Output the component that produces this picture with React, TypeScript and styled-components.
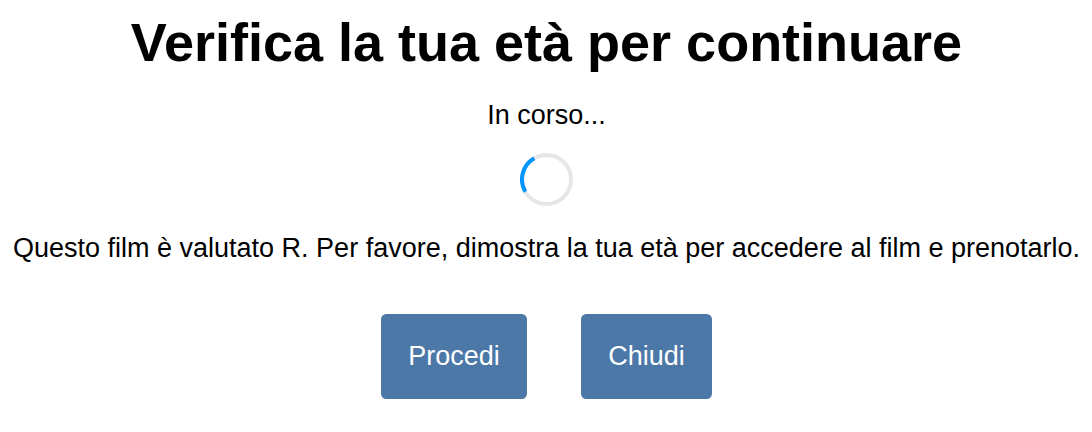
import React from "react";
import styled, { createGlobalStyle } from "styled-components";

const GlobalStyle = createGlobalStyle`
  body { margin: 0; background: #fff; }
`;

const Page = styled.main`
  box-sizing: border-box;
  height: 432px;
  overflow: hidden;
  display: flex;
  flex-direction: column;
  align-items: center;
  padding: 12px 0 0 1px;
  color: #000;
  font-family: "Liberation Sans", Arial, sans-serif;
  font-size: 27px;
`;

const Title = styled.h1`
  margin: 0;
  font-size: 54px;
  line-height: 60px;
  white-space: nowrap;
`;

const Text = styled.p<{ $top: number }>`
  margin: ${(p) => p.$top}px 0 0;
  line-height: 30px;
  white-space: nowrap;
`;

const Spinner = styled.svg`
  display: block;
  width: 53px;
  height: 53px;
  margin-top: 23px;
`;

const Actions = styled.div`
  display: flex;
  gap: 54px;
  margin-top: 51px;
`;

const Button = styled.button<{ $width: number }>`
  width: ${(p) => p.$width}px;
  height: 85px;
  padding: 0;
  border: 0;
  border-radius: 5.4px;
  background: #4c78a8;
  color: #fff;
  font: inherit;
`;

export default function App() {
  return (
    <Page>
      <GlobalStyle />
      <Title>Verifica la tua età per continuare</Title>
      <Text $top={28}>In corso...</Text>
      <Spinner viewBox="0 0 53 53" fill="none" strokeWidth="4">
        <circle cx="26.5" cy="26.5" r="24.5" stroke="#e6e6e6" />
        <path d="M5.28 38.75A24.5 24.5 0 0 1 14.25 5.28" stroke="#0095ff" />
      </Spinner>
      <Text $top={27}>
        Questo film è valutato R. Per favore, dimostra la tua età per accedere al film e prenotarlo.
      </Text>
      <Actions>
        <Button $width={146}>Procedi</Button>
        <Button $width={131}>Chiudi</Button>
      </Actions>
    </Page>
  );
}
